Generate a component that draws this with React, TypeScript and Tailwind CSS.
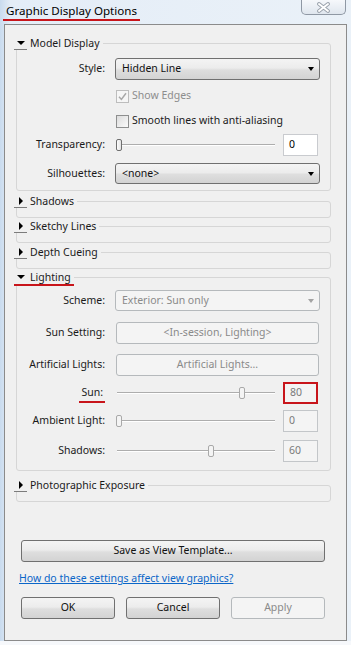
import type { ReactNode } from 'react';

const btnFace =
  'border-[#707070] bg-[linear-gradient(#f4f4f4,#ececec_45%,#dedede_55%,#d3d3d3)] text-[#111]';
const btnOff = 'border-[#b5b9bc] bg-[#f4f4f4] text-[#8a8a8a]';

function Caret({ open }: { open: boolean }) {
  return open ? (
    <span className="block h-0 w-0 border-x-[4px] border-t-[4px] border-x-transparent border-t-black" />
  ) : (
    <span className="block h-0 w-0 border-y-[4px] border-l-[4px] border-y-transparent border-l-black" />
  );
}

function Group({
  title,
  open = false,
  marked = false,
  className = '',
  children,
}: {
  title: string;
  open?: boolean;
  marked?: boolean;
  className?: string;
  children?: ReactNode;
}) {
  return (
    <div className={className}>
      <div
        className={`relative z-10 flex h-[14px] w-fit items-center bg-[#f0f0f0] pr-[3px] ${
          marked ? 'shadow-[0_2px_0_0_#c8151b]' : ''
        }`}
      >
        <span
          className={`flex h-full w-[13px] items-center justify-center ${
            marked ? '' : 'border-b border-[#7c7c7c]'
          }`}
        >
          <Caret open={open} />
        </span>
        <span className="ml-[3px] leading-[14px]">{title}</span>
      </div>
      <div
        className={`-mt-[7px] ml-[2px] rounded-[3px] border border-[#d6d6d6] ${open ? '' : 'h-[17px]'}`}
      >
        {children}
      </div>
    </div>
  );
}

function Row({ label, className = '', children }: { label: ReactNode; className?: string; children: ReactNode }) {
  return (
    <div className={`flex items-center ${className}`}>
      <div className="w-[88px] text-right">{label}</div>
      <div className="ml-[10px] flex h-full w-[205px] items-center">{children}</div>
    </div>
  );
}

function Combo({ value, disabled = false }: { value: string; disabled?: boolean }) {
  return (
    <div
      className={`flex h-full w-full items-center justify-between rounded-[3px] border pl-[6px] pr-[5px] ${
        disabled ? btnOff : btnFace
      }`}
    >
      <span>{value}</span>
      <span
        className={`h-0 w-0 border-x-[3.5px] border-t-[4px] border-x-transparent ${
          disabled ? 'border-t-[#a3a3a3]' : 'border-t-black'
        }`}
      />
    </div>
  );
}

function Slider({ pct, disabled = false }: { pct: number; disabled?: boolean }) {
  return (
    <div className="relative h-full flex-1">
      <div className="absolute left-[2px] right-[1px] top-[10px] h-[2px] border-t border-[#adadad] bg-white" />
      <div
        className={`absolute top-[5px] h-[12px] w-[6px] rounded-[2px] border ${
          disabled
            ? 'border-[#a9a9a9] bg-[#f4f4f4]'
            : 'border-[#6f6f6f] bg-[linear-gradient(90deg,#fdfdfd,#e3e3e3)]'
        }`}
        style={{ left: 1 + pct * 1.54 }}
      />
    </div>
  );
}

function NumBox({ value, disabled = false, marked = false }: { value: string; disabled?: boolean; marked?: boolean }) {
  return (
    <div
      className={`ml-[7px] mr-[2px] flex h-full w-[35px] items-center pl-[5px] ${
        marked
          ? 'border-2 border-[#c8151b] bg-[#f4f4f4] text-[#7a7a7a]'
          : disabled
            ? 'border border-[#c3c6c9] bg-[#f4f4f4] text-[#7a7a7a]'
            : 'border border-[#c9cbcf] bg-white text-black'
      }`}
    >
      {value}
    </div>
  );
}

function Check({ checked, disabled, label }: { checked: boolean; disabled: boolean; label: string }) {
  return (
    <div className="flex items-center">
      <span
        className={`ml-[1px] flex h-[13px] w-[13px] items-center justify-center border ${
          disabled ? 'border-[#bdbdbd] bg-[#f6f6f6]' : 'border-[#8e8f8f] bg-[linear-gradient(135deg,#dcdcdc,#fbfbfb)]'
        }`}
      >
        {checked && (
          <svg width="9" height="9" viewBox="0 0 9 9">
            <path d="M1 4.8 L3.4 7.4 L8 1.2" fill="none" stroke="#a8a8a8" strokeWidth="1.5" />
          </svg>
        )}
      </span>
      <span className={`ml-[3px] ${disabled ? 'text-[#8d8d8d]' : ''}`}>{label}</span>
    </div>
  );
}

function Button({ children, disabled = false, className = '' }: { children: ReactNode; disabled?: boolean; className?: string }) {
  return (
    <button
      type="button"
      className={`flex h-[22px] items-center justify-center rounded-[3px] border ${disabled ? btnOff : btnFace} ${className}`}
    >
      {children}
    </button>
  );
}

export default function App() {
  return (
    <div className="flex h-[645px] w-[351px] flex-col overflow-hidden bg-[linear-gradient(90deg,#c9dbee,#e4edf7_3%,#eaf1f8)] font-['Noto_Sans',sans-serif] text-[10.5px] text-[#1a1a1a]">
      {/* title bar */}
      <div className="flex h-[24px] shrink-0 items-start">
        <div className="ml-[3px] h-[21px] border-b-2 border-[#c8151b] px-[3px] pt-[3px] text-[11.6px] leading-[16px] text-black">
          Graphic Display Options
        </div>
        <div className="ml-auto mr-[5px] flex h-[15px] w-[45px] items-center justify-center rounded-b-[5px] border border-t-0 border-[#8f98a4] bg-[linear-gradient(#f6f8fb,#dfe6ee)]">
          <svg width="15" height="11" viewBox="0 0 15 11">
            <path d="M3 2 L12 9 M12 2 L3 9" stroke="#9aa2ac" strokeWidth="3.8" strokeLinecap="round" />
            <path d="M3 2 L12 9 M12 2 L3 9" stroke="#ffffff" strokeWidth="1.9" strokeLinecap="round" />
          </svg>
        </div>
      </div>

      {/* dialog body */}
      <div className="mx-[4px] h-[617px] shrink-0 border border-[#8b8b8b] bg-[#f0f0f0] pl-[9px] pr-[15px] pt-[11px]">
        <Group title="Model Display" open>
          <div className="pb-[6px] pr-[9px] pt-[14px]">
            <Row label="Style:" className="h-[22px]">
              <Combo value="Hidden Line" />
            </Row>
            <Row label="" className="mt-[8px] h-[16px]">
              <Check checked disabled label="Show Edges" />
            </Row>
            <Row label="" className="mt-[9px] h-[16px]">
              <Check checked={false} disabled={false} label="Smooth lines with anti-aliasing" />
            </Row>
            <Row label="Transparency:" className="mt-[5px] h-[22px]">
              <Slider pct={0} />
              <NumBox value="0" />
            </Row>
            <Row label="Silhouettes:" className="mt-[7px] h-[21px]">
              <Combo value="<none>" />
            </Row>
          </div>
        </Group>

        <Group title="Shadows" className="mt-[3px]" />
        <Group title="Sketchy Lines" className="mt-[1px]" />
        <Group title="Depth Cueing" className="mt-[2px]" />

        <Group title="Lighting" open marked className="mt-[1px]">
          <div className="pb-[8px] pr-[9px] pt-[12px]">
            <Row label="Scheme:" className="h-[21px]">
              <Combo value="Exterior: Sun only" disabled />
            </Row>
            <Row label="Sun Setting:" className="mt-[11px] h-[21px]">
              <Button disabled className="ml-[1px] w-[203px]">
                &lt;In-session, Lighting&gt;
              </Button>
            </Row>
            <Row label="Artificial Lights:" className="mt-[11px] h-[21px]">
              <Button disabled className="ml-[1px] w-[203px]">
                Artificial Lights...
              </Button>
            </Row>
            <Row
              label={
                <span className="border-b-2 border-[#c8151b] px-[2px] pb-[2px]">Sun:</span>
              }
              className="mt-[7px] h-[22px]"
            >
              <Slider pct={80} disabled />
              <NumBox value="80" disabled marked />
            </Row>
            <Row label="Ambient Light:" className="mt-[6px] h-[22px]">
              <Slider pct={0} disabled />
              <NumBox value="0" disabled />
            </Row>
            <Row label="Shadows:" className="mt-[8px] h-[22px]">
              <Slider pct={60} disabled />
              <NumBox value="60" disabled />
            </Row>
          </div>
        </Group>

        <Group title="Photographic Exposure" className="mt-[7px]" />

        <div className="ml-[7px] mt-[38px] w-[304px]">
          <Button className="w-full">Save as View Template...</Button>
        </div>
        <div className="ml-[5px] mt-[9px] leading-[14px] text-[#0b66c8] underline">
          How do these settings affect view graphics?
        </div>
        <div className="ml-[7px] mt-[12px] flex w-[304px] justify-between">
          <Button className="w-[94px]">OK</Button>
          <Button className="w-[94px]">Cancel</Button>
          <Button disabled className="w-[94px]">
            Apply
          </Button>
        </div>
      </div>
      <div className="flex-1 bg-[#f6f8fb]" />
    </div>
  );
}
